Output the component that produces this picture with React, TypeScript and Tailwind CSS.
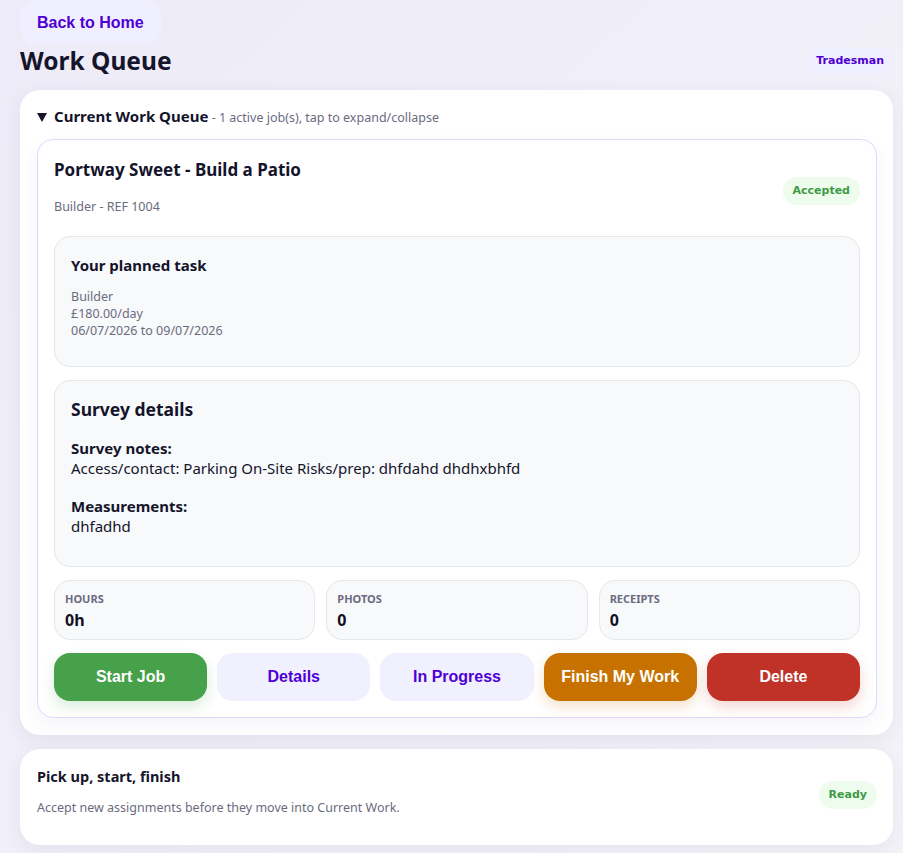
const sans = "font-['Noto_Sans',sans-serif]";
const btnFont = "font-['Liberation_Sans',Arial,sans-serif]";

const stats = [
  { label: 'Hours', value: '0h' },
  { label: 'Photos', value: '0' },
  { label: 'Receipts', value: '0' },
];

export default function App() {
  return (
    <div className={`min-h-screen bg-gradient-to-br from-[#eeebf8] to-[#f4f3f8] pb-4 pl-5 pr-[10px] ${sans}`}>
      {/* Top bar */}
      <button className={`h-[45px] rounded-2xl bg-[#f0efff] px-[17px] text-[16px] font-bold text-[#4f00d4] ${btnFont}`}>
        Back to Home
      </button>
      <div className="flex items-center justify-between">
        <h1 className="text-[24.5px] font-bold leading-[32px] text-[#14142b]">Work Queue</h1>
        <span className="mr-[-1px] rounded-full bg-[#eeeefe] px-[10px] py-[5px] font-['DejaVu_Sans',sans-serif] text-[11px] font-bold leading-4 text-[#4f00d4]">
          Tradesman
        </span>
      </div>

      {/* Current work card */}
      <section className="mt-[13px] rounded-[20px] bg-white pb-[17px] pl-[17px] pr-4 pt-[16px] shadow-[0_6px_20px_rgba(60,50,110,0.07)]">
        <div className="flex items-center gap-[7px] text-[#14142b]">
          <svg width="10" height="9" viewBox="0 0 10 9" className="mt-[1px]">
            <path d="M0 0h10L5 9z" fill="#14142b" />
          </svg>
          <p className="leading-5">
            <span className="text-[15px] font-bold">Current Work Queue</span>
            <span className="text-[12.5px] text-[#6b6b80]"> - 1 active job(s), tap to expand/collapse</span>
          </p>
        </div>

        <div className="mt-[11px] rounded-2xl border border-[#e0d8fb] bg-white px-4 pb-4 pt-4 shadow-[0_8px_20px_rgba(80,60,160,0.06)]">
          <div className="flex items-start justify-between">
            <div>
              <h2 className="text-[17px] font-bold leading-7 text-[#14142b]">Portway Sweet - Build a Patio</h2>
              <p className="mt-[14px] text-[12.5px] text-[#6b6b80]">Builder - REF 1004</p>
            </div>
            <span className="mt-[21px] rounded-full bg-[#eefcee] px-[10px] py-[6px] font-['DejaVu_Sans',sans-serif] text-[11px] font-bold leading-4 text-[#3e9a45]">
              Accepted
            </span>
          </div>

          <div className="mt-[19px] rounded-2xl border border-[#e6e7ec] bg-[#f8f9fb] px-4 pb-[27px] pt-[17px]">
            <h3 className="text-[15px] font-bold leading-[22px] text-[#14142b]">Your planned task</h3>
            <div className="mt-3 text-[12.5px] leading-[17px] text-[#6b6b80]">
              <p>Builder</p>
              <p>£180.00/day</p>
              <p>06/07/2026 to 09/07/2026</p>
            </div>
          </div>

          <div className="mt-[13px] rounded-2xl border border-[#e6e7ec] bg-[#f8f9fb] px-4 pb-[30px] pt-[16px]">
            <h3 className="text-[17.5px] font-bold leading-6 text-[#14142b]">Survey details</h3>
            <div className="mt-[17px] text-[15px] leading-[20px] text-[#14142b]">
              <p className="font-bold">Survey notes:</p>
              <p>Access/contact: Parking On-Site Risks/prep: dhfdahd dhdhxbhfd</p>
              <p className="mt-[18px] font-bold">Measurements:</p>
              <p>dhfadhd</p>
            </div>
          </div>

          <div className="mt-[13px] grid grid-cols-3 gap-[11px]">
            {stats.map((s) => (
              <div key={s.label} className="h-[60px] rounded-2xl border border-[#e6e7ec] bg-[#f8f9fb] px-[10px] pt-[11px]">
                <p className="text-[11px] font-bold uppercase leading-[14px] text-[#6b6b80]">{s.label}</p>
                <p className="mt-[4px] text-[16px] font-bold leading-5 text-[#111122]">{s.value}</p>
              </div>
            ))}
          </div>

          <div className={`mt-[13px] grid grid-cols-5 gap-[10px] text-[16px] font-bold ${btnFont}`}>
            <button className="h-12 rounded-2xl bg-[#46a14a] text-white shadow-[0_6px_14px_rgba(70,161,74,0.2)]">Start Job</button>
            <button className="h-12 rounded-2xl bg-[#f0f0ff] text-[#4f00d4]">Details</button>
            <button className="h-12 rounded-2xl bg-[#f0f0ff] text-[#4f00d4]">In Progress</button>
            <button className="h-12 rounded-2xl bg-[#c77200] text-white shadow-[0_6px_14px_rgba(199,114,0,0.2)]">Finish My Work</button>
            <button className="h-12 rounded-2xl bg-[#c03228] text-white shadow-[0_6px_14px_rgba(192,50,40,0.2)]">Delete</button>
          </div>
        </div>
      </section>

      {/* Pick up card */}
      <section className="mt-[14px] flex items-center justify-between rounded-[20px] bg-white pb-[28px] pl-[17px] pr-4 pt-[17px] shadow-[0_6px_20px_rgba(60,50,110,0.07)]">
        <div>
          <h3 className="text-[14.5px] font-bold leading-5 text-[#14142b]">Pick up, start, finish</h3>
          <p className="mt-[13px] text-[12.5px] leading-[18px] text-[#6b6b80]">Accept new assignments before they move into Current Work.</p>
        </div>
        <span className="mt-[8px] rounded-full bg-[#eefcee] px-[10px] py-[6px] font-['DejaVu_Sans',sans-serif] text-[11px] font-bold leading-4 text-[#3e9a45]">
          Ready
        </span>
      </section>
    </div>
  );
}
